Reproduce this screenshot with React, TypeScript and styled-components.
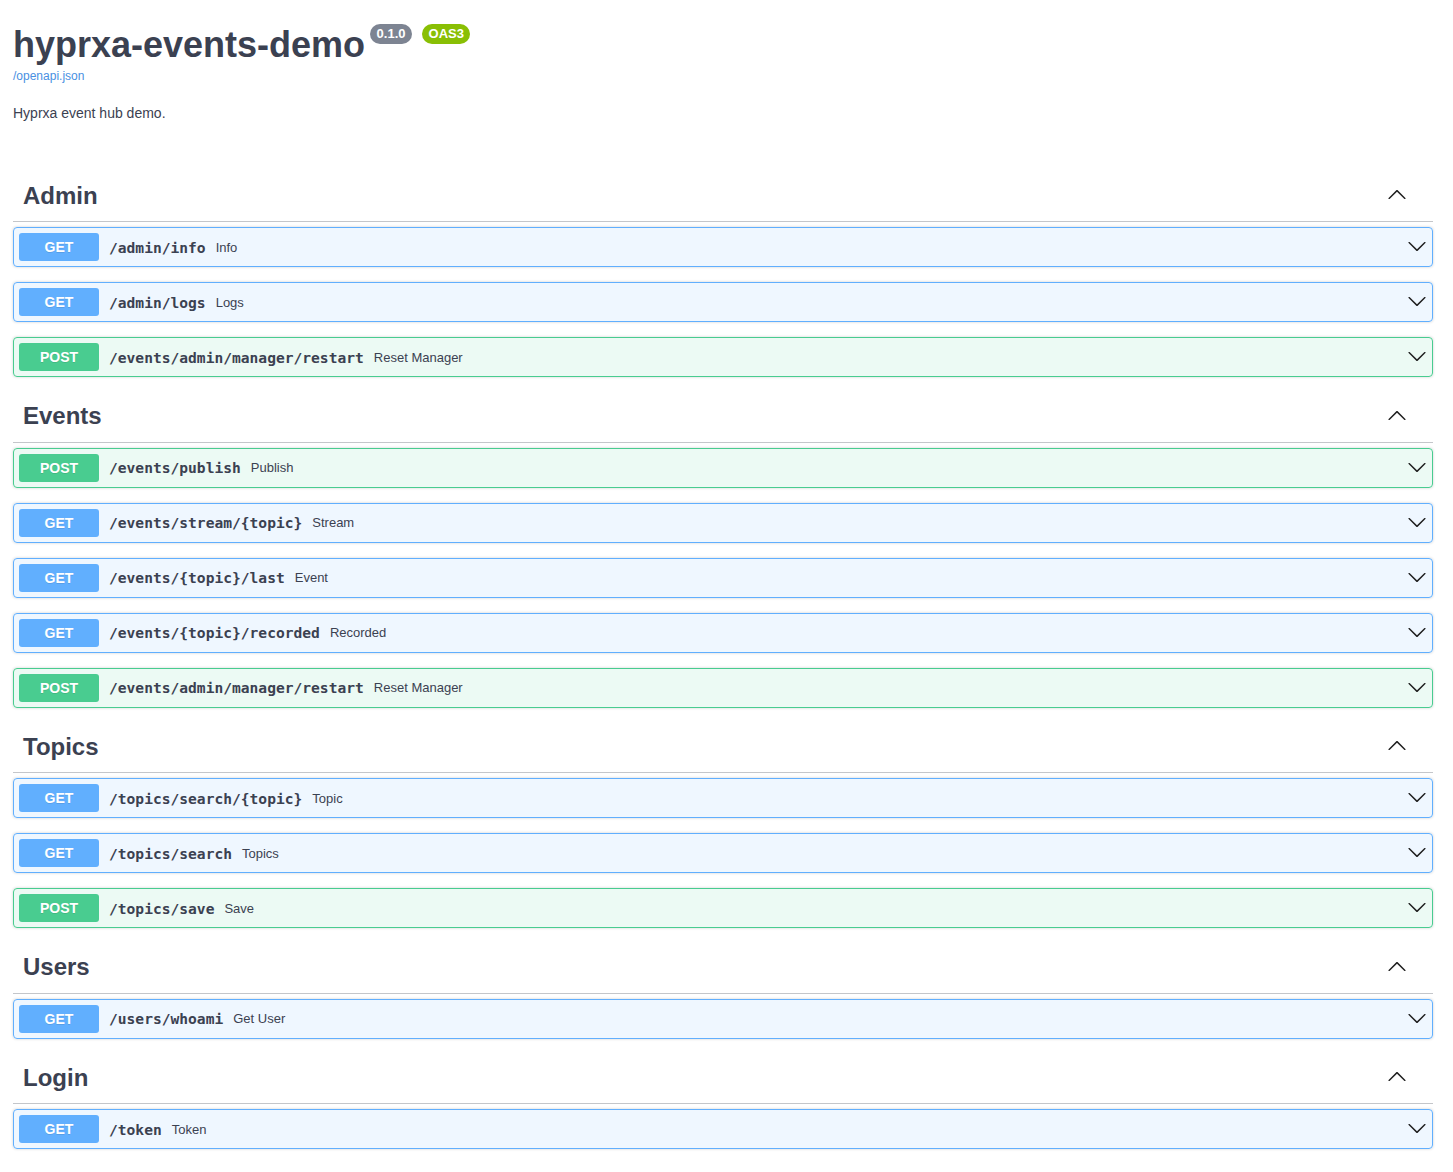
import React from "react";
import styled, { createGlobalStyle } from "styled-components";

type Method = "GET" | "POST";

const METHOD_COLORS: Record<Method, { main: string; bg: string }> = {
  GET: { main: "#61affe", bg: "rgba(97,175,254,.1)" },
  POST: { main: "#49cc90", bg: "rgba(73,204,144,.1)" },
};

const GlobalStyle = createGlobalStyle`
  html, body {
    margin: 0;
    padding: 0;
    background: #fff;
  }
  body {
    font-family: "Liberation Sans", Arial, sans-serif;
    color: #3b4151;
  }
`;

const Wrapper = styled.div`
  padding: 25px 20px 0 13px;
`;

const Info = styled.div`
  margin-bottom: 50.5px;
`;

const TitleRow = styled.div`
  display: flex;
  align-items: flex-start;
`;

const Title = styled.h2`
  margin: 0;
  font-size: 36px;
  line-height: 40px;
  font-weight: 700;
  color: #3b4151;
`;

const Badge = styled.span<{ $color: string; $gap: number }>`
  margin-left: ${(p) => p.$gap}px;
  margin-top: -1px;
  height: 20px;
  line-height: 20px;
  padding: 0 6.5px;
  border-radius: 57px;
  background: ${(p) => p.$color};
  color: #fff;
  font-size: 13px;
  font-weight: 700;
`;

const BaseUrl = styled.a`
  display: block;
  margin-top: 4px;
  font-size: 12px;
  line-height: 14px;
  color: #4990e2;
  text-decoration: none;
`;

const Description = styled.p`
  margin: 22px 0 0;
  font-size: 14px;
  line-height: 16px;
  color: #3b4151;
`;

const TagSection = styled.section``;

const TagHeader = styled.div`
  display: flex;
  align-items: center;
  padding: 9px 26px 11.5px 10px;
  margin-bottom: 5px;
  border-bottom: 1px solid rgba(59, 65, 81, 0.3);
`;

const TagTitle = styled.h3`
  margin: 0;
  flex: 1;
  font-size: 24px;
  line-height: 29px;
  font-weight: 700;
  color: #3b4151;
`;

const Arrow = styled.svg<{ $lift: number }>`
  flex: none;
  width: 20px;
  height: 20px;
  fill: #1f1f1f;
  margin-bottom: ${(p) => p.$lift}px;
`;

const OpBlock = styled.div<{ $method: Method }>`
  margin-bottom: 15px;
  border: 1px solid ${(p) => METHOD_COLORS[p.$method].main};
  border-radius: 4px;
  background: ${(p) => METHOD_COLORS[p.$method].bg};
  box-shadow: 0 0 3px rgba(0, 0, 0, 0.19);
`;

const Summary = styled.div`
  display: flex;
  align-items: center;
  padding: 5px;
`;

const MethodBadge = styled.span<{ $method: Method }>`
  min-width: 80px;
  padding: 6px 0;
  font-size: 14px;
  line-height: 16px;
  font-weight: 700;
  text-align: center;
  border-radius: 3px;
  color: #fff;
  background: ${(p) => METHOD_COLORS[p.$method].main};
  text-shadow: 0 1px 0 rgba(0, 0, 0, 0.1);
`;

const Path = styled.span`
  padding: 0 10px;
  font-family: "DejaVu Sans Mono", "Liberation Mono", monospace;
  font-size: 14.6px;
  font-weight: 700;
  color: #3b4151;
`;

const OpDesc = styled.span`
  flex: 1;
  font-size: 13px;
  color: #3b4151;
`;

const ArrowUp = () => (
  <Arrow viewBox="0 0 20 20" $lift={2}>
    <path d="M17.418 14.908c.272.268.709.268.979 0s.271-.701 0-.969l-7.908-7.83c-.27-.268-.707-.268-.979 0l-7.908 7.83c-.27.268-.27.701 0 .969.271.268.709.268.979 0L10 7.749l7.418 7.159z" />
  </Arrow>
);

const ArrowDown = () => (
  <Arrow viewBox="0 0 20 20" $lift={2}>
    <path d="M17.418 6.109c.272-.268.709-.268.979 0s.271.701 0 .969l-7.908 7.83c-.27.268-.707.268-.979 0l-7.908-7.83c-.27-.268-.27-.701 0-.969.271-.268.709-.268.979 0L10 13.25l7.418-7.141z" />
  </Arrow>
);

type Op = { method: Method; path: string; summary: string };
type Tag = { name: string; ops: Op[] };

const TAGS: Tag[] = [
  {
    name: "Admin",
    ops: [
      { method: "GET", path: "/admin/info", summary: "Info" },
      { method: "GET", path: "/admin/logs", summary: "Logs" },
      { method: "POST", path: "/events/admin/manager/restart", summary: "Reset Manager" },
    ],
  },
  {
    name: "Events",
    ops: [
      { method: "POST", path: "/events/publish", summary: "Publish" },
      { method: "GET", path: "/events/stream/{topic}", summary: "Stream" },
      { method: "GET", path: "/events/{topic}/last", summary: "Event" },
      { method: "GET", path: "/events/{topic}/recorded", summary: "Recorded" },
      { method: "POST", path: "/events/admin/manager/restart", summary: "Reset Manager" },
    ],
  },
  {
    name: "Topics",
    ops: [
      { method: "GET", path: "/topics/search/{topic}", summary: "Topic" },
      { method: "GET", path: "/topics/search", summary: "Topics" },
      { method: "POST", path: "/topics/save", summary: "Save" },
    ],
  },
  {
    name: "Users",
    ops: [{ method: "GET", path: "/users/whoami", summary: "Get User" }],
  },
  {
    name: "Login",
    ops: [{ method: "GET", path: "/token", summary: "Token" }],
  },
];

export default function App() {
  return (
    <>
      <GlobalStyle />
      <Wrapper>
        <Info>
          <TitleRow>
            <Title>hyprxa-events-demo</Title>
            <Badge $color="#7d8492" $gap={5}>0.1.0</Badge>
            <Badge $color="#89bf04" $gap={10}>OAS3</Badge>
          </TitleRow>
          <BaseUrl href="#">/openapi.json</BaseUrl>
          <Description>Hyprxa event hub demo.</Description>
        </Info>
        {TAGS.map((tag) => (
          <TagSection key={tag.name}>
            <TagHeader>
              <TagTitle>{tag.name}</TagTitle>
              <ArrowUp />
            </TagHeader>
            {tag.ops.map((op, i) => (
              <OpBlock key={i} $method={op.method}>
                <Summary>
                  <MethodBadge $method={op.method}>{op.method}</MethodBadge>
                  <Path>{op.path}</Path>
                  <OpDesc>{op.summary}</OpDesc>
                  <ArrowDown />
                </Summary>
              </OpBlock>
            ))}
          </TagSection>
        ))}
      </Wrapper>
    </>
  );
}
